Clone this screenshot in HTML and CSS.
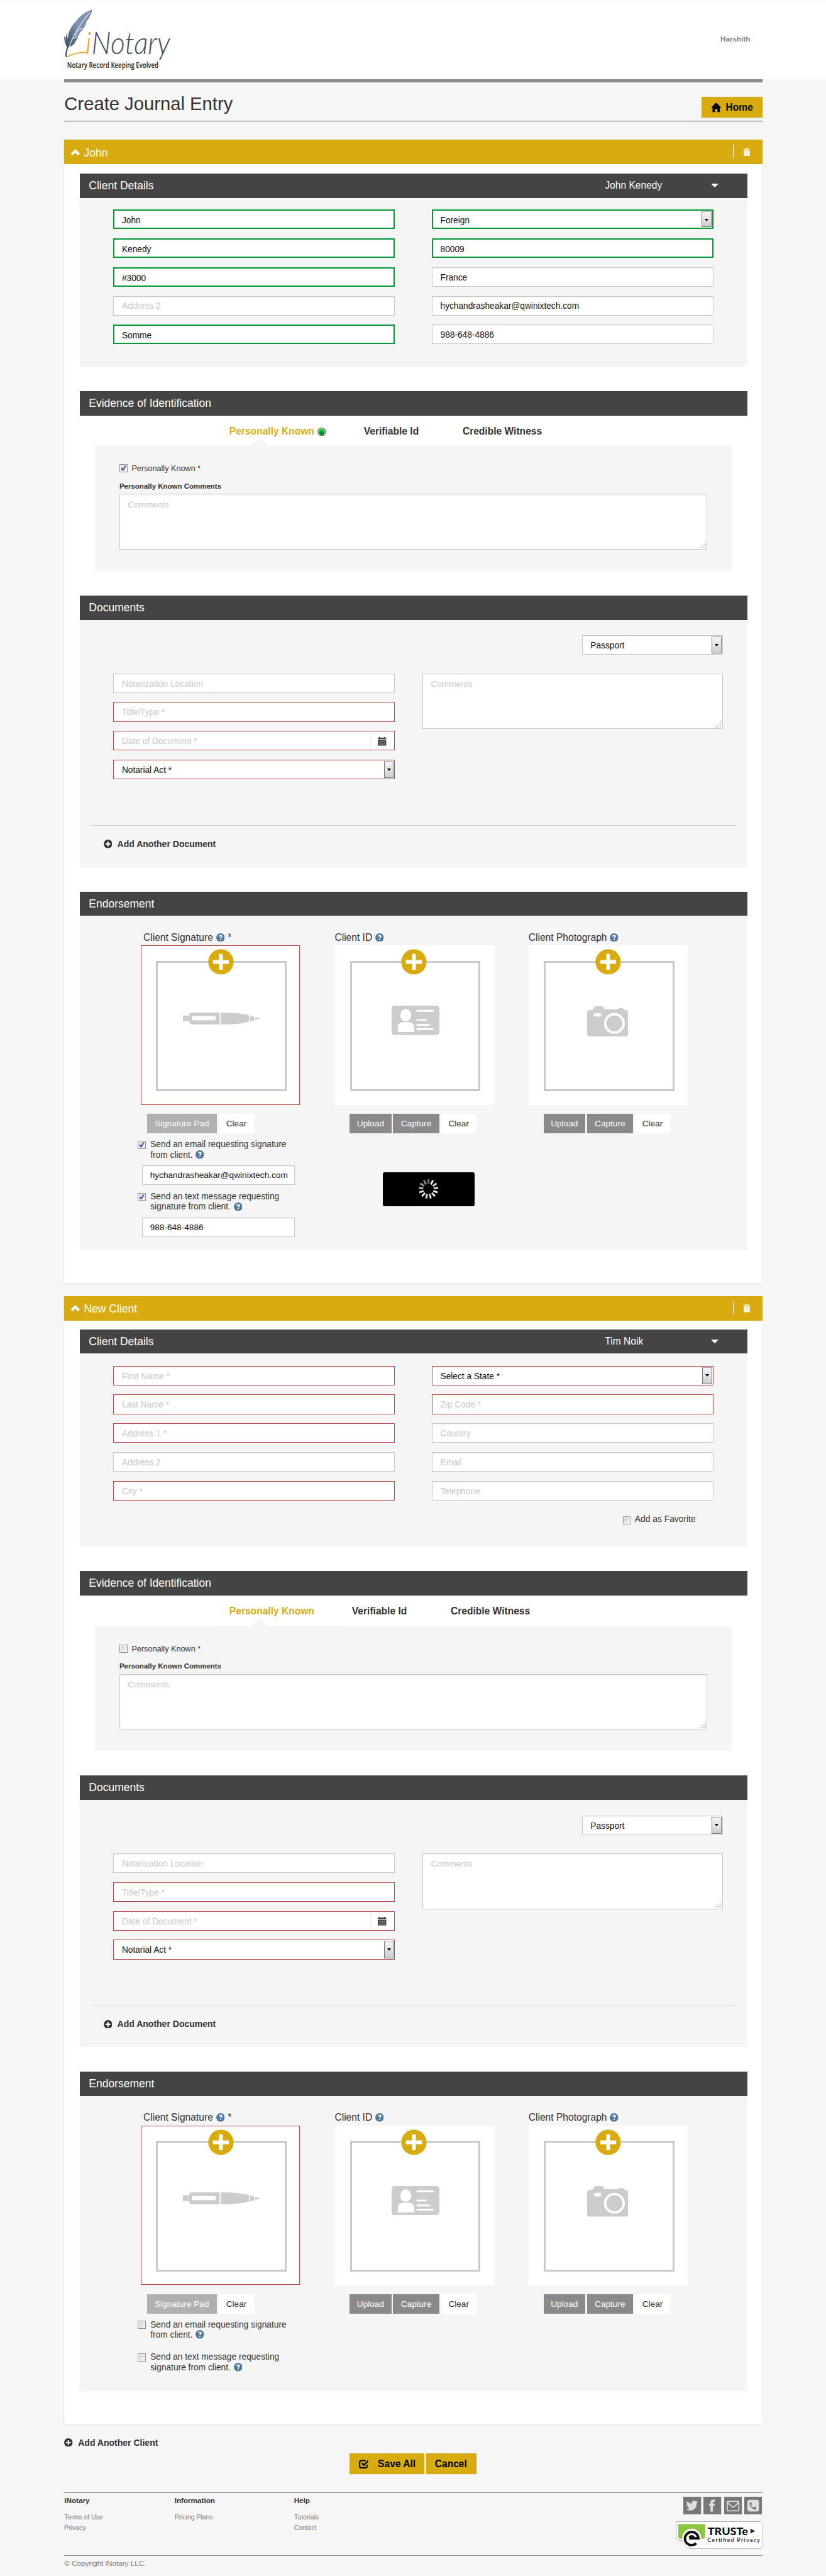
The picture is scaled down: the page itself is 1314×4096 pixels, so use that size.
FILE: index.html
```html
<!DOCTYPE html>
<html lang="en">
<head>
<meta charset="utf-8">
<title>iNotary - Create Journal Entry</title>
<link rel="stylesheet" href="styles.css">
</head>
<body>
<svg class="sprite" width="0" height="0" aria-hidden="true">
  <defs>
    <linearGradient id="quill" x1="1" y1="0" x2="0" y2="1"><stop offset="0" stop-color="#7d91b5"/><stop offset=".5" stop-color="#8093ac"/><stop offset="1" stop-color="#35475c"/></linearGradient>
    <linearGradient id="led" x1="0" y1="0" x2="0" y2="1"><stop offset="0" stop-color="#2fd04a"/><stop offset=".5" stop-color="#0ba52e"/><stop offset="1" stop-color="#064d10"/></linearGradient>
  </defs>
  <symbol id="chevron" viewBox="0 0 18 12"><path d="M1.500 8.500 9 1l7.500 7.500-3 3L9 7l-4.500 4.500z" fill="#fff"/></symbol>
  <symbol id="trash" viewBox="0 0 12 14"><path d="M4 2.500V.7h4v1.800M.3 3.100h11.400" stroke="#fff" stroke-width="1.200" fill="none"/><path d="M1.500 5h9v8.500h-9z" fill="#fff" stroke="#fff" stroke-width=".8"/><path d="M3.700 5.500v7M6 5.500v7M8.300 5.500v7" stroke="#e3c25a" stroke-width=".6"/></symbol>
  <symbol id="home" viewBox="0 0 17 16"><path d="M8.500 0 17 8.500h-2.500V16h-4v-5.500h-4V16h-4V8.500H0z"/></symbol>
  <symbol id="help" viewBox="0 0 14 14"><circle cx="7" cy="7" r="7" fill="#51779d"/><path d="M4.900 5.400C5 3.900 6 3.500 7.100 3.500c1.200 0 2.100.6 2.100 1.700C9.200 6.500 7.200 6.500 7.100 8.100" fill="none" stroke="#fff" stroke-width="1.900"/><path d="M6 9.200h2.200v1.900H6z" fill="#fff"/></symbol>
  <symbol id="plus" viewBox="0 0 42 42"><circle cx="21" cy="21" r="20.700" fill="#d8ac10"/><path d="M18 8h6v10h10v6H24v10h-6V24H8v-6h10z" fill="#fff"/></symbol>
  <symbol id="add" viewBox="0 0 14 14"><circle cx="7" cy="7" r="7" fill="#333"/><path d="M5.900 3h2.200v2.900H11v2.200H8.100V11H5.900V8.100H3V5.900h2.900z" fill="#fff"/></symbol>
  <symbol id="calendar" viewBox="0 0 14 14"><path d="M0 1h2V0h2v1h6V0h2v1h2v2.500H0zM0 4.500h14V14H0z" fill="#444"/><path d="M0 4h14" stroke="#bbb"/><path d="M2 7.500h10M2 10h10M2 12.300h10M3.500 6v7.500M7 6v7.500M10.500 6v7.500" stroke="#999" stroke-width=".6"/></symbol>
  <symbol id="pen" viewBox="0 0 126 20"><path fill="#ccc" d="M0 5h9.500v9H0zM15 0h45v19.500H15q-5-1-5-5V5q0-4.500 5-5zM62 0q30 0 46 4.500v10Q92 19.500 62 19.500zM109.500 5l7 2v6l-7 2zM118 7.500l8 2.200-8 2.300z"/><path fill="#fff" d="M15 6h36q3 0 3 3.300T51 12.500H15z"/></symbol>
  <symbol id="idcard" viewBox="0 0 78 48"><rect width="78" height="48" rx="5" fill="#ccc"/><ellipse cx="23" cy="15.500" rx="9" ry="10" fill="#fff"/><path d="M10 43V36q0-8 8-9h10q9 1 9 9v7z" fill="#fff"/><path d="M42 8.500h26M42 23.500h14M42 31.500h20M42 38.500h25" stroke="#fff" stroke-width="3" stroke-linecap="round"/></symbol>
  <symbol id="camera" viewBox="0 0 67 50"><path fill="#ccc" d="M5 6h4q2-6 5-6h10q3 0 4 5h22l3-2h5l3 3q6 0 6 5v34q0 5-5 5H5q-5 0-5-5V11q0-5 5-5z"/><rect x="11" y="11" width="12" height="6" rx="3" fill="#fff"/><circle cx="44.500" cy="28" r="15" fill="none" stroke="#fff" stroke-width="4"/></symbol>
</svg>
<div class="page">
  <header class="header">
    <div class="container header-row">
      <svg class="logo" width="180" height="110" viewBox="0 0 180 110">
        <path d="M46 7.500C36 10 24 19 20 26 8 38 6 48 6 56L4 46C2 54 2 62 6 70c4-3 8-3 12-9 4-6 5-10 8-16 6-7 10-11 10-17C42 20 45 14 46 7.500z" fill="url(#quill)"/>
        <path d="M1 52c0 7 2 12 5 17" stroke="#4b5c72" stroke-width="2" fill="none"/>
        <path d="M42 12C27 30 14 50 8 69M18 50l5-8M23 50l-8 5M29 38l-7 3" stroke="#e9eef4" stroke-width="1.200" fill="none"/>
        <path d="M8 66C5 72 4 78 4 85l-2-1C2 77 3 72 6 66z" fill="#35475c"/>
        <path d="M4 85Q17 77 37 77" stroke="#e8a317" stroke-width="1.500" fill="none"/>
        <text class="logo-name" x="35" y="80" textLength="138" lengthAdjust="spacingAndGlyphs"><tspan class="logo-i">i</tspan>Notary</text>
        <text class="logo-tag" x="5" y="103" textLength="149" lengthAdjust="spacingAndGlyphs">Notary Record Keeping Evolved</text>
      </svg>
      <span class="user">Harshith</span>
    </div>
  </header>
  <main class="container">
    <div class="title-row">
      <h1>Create Journal Entry</h1>
      <a class="btn-gold home"><svg width="17" height="16"><use href="#home"/></svg>Home</a>
    </div>

    <section class="card">
      <div class="card-head"><svg width="18" height="12"><use href="#chevron"/></svg><span>John</span><i class="divider"></i><svg class="trash" width="12" height="14"><use href="#trash"/></svg></div>
      <div class="bar"><span>Client Details</span><span class="picked">John Kenedy</span><i class="caret"></i></div>
      <div class="panel client">
        <div class="cols">
          <div class="fields">
            <div class="field ok">John</div>
            <div class="field ok">Kenedy</div>
            <div class="field ok">#3000</div>
            <div class="field empty">Address 2</div>
            <div class="field ok">Somme</div>
          </div>
          <div class="fields">
            <div class="field ok select">Foreign<i class="arrow"></i></div>
            <div class="field ok">80009</div>
            <div class="field">France</div>
            <div class="field">hychandrasheakar@qwinixtech.com</div>
            <div class="field">988-648-4886</div>
          </div>
        </div>
      </div>

      <div class="bar spaced">Evidence of Identification</div>
      <div class="tabs">
        <span class="tab active">Personally Known<svg class="led" width="14" height="14" viewBox="0 0 14 14"><circle cx="7" cy="7" r="6.300" fill="#fff" stroke="#25802c" stroke-width="1.200"/><circle cx="7" cy="7" r="4.900" fill="url(#led)"/></svg></span>
        <span class="tab verify">Verifiable Id</span>
        <span class="tab">Credible Witness</span>
      </div>
      <div class="panel evidence">
        <div class="known"><i class="check"><svg width="9" height="9" viewBox="0 0 9 9"><path d="M1 4.500 3.500 7.500 8 .8" fill="none" stroke="#3b4f9e" stroke-width="2"/></svg></i>Personally Known *</div>
        <div class="known-label">Personally Known Comments</div>
        <div class="area">Comments<i class="grip"></i></div>
      </div>

      <div class="bar spaced">Documents</div>
      <div class="panel documents">
        <div class="field select doc-type">Passport<i class="arrow"></i></div>
        <div class="cols">
          <div class="fields">
            <div class="field empty">Notarization Location</div>
            <div class="field empty bad">Title/Type *</div>
            <div class="field empty bad date">Date of Document *<span class="cal"><svg width="14" height="14"><use href="#calendar"/></svg></span></div>
            <div class="field bad select">Notarial Act *<i class="arrow"></i></div>
          </div>
          <div class="area">Comments<i class="grip"></i></div>
        </div>
        <div class="add"><svg width="14" height="14"><use href="#add"/></svg>Add Another Document</div>
      </div>

      <div class="bar spaced">Endorsement</div>
      <div class="panel endorse">
        <div class="shot signature">
          <div class="shot-label">Client Signature <svg width="14" height="14"><use href="#help"/></svg> *</div>
          <div class="frame bad"><div class="inner"><svg width="126" height="20"><use href="#pen"/></svg><svg class="plus" width="42" height="42"><use href="#plus"/></svg></div></div>
          <div class="buttons"><span class="btn pad">Signature Pad</span><span class="btn clear">Clear</span></div>
          <div class="ask"><i class="check"><svg width="9" height="9" viewBox="0 0 9 9"><path d="M1 4.500 3.500 7.500 8 .8" fill="none" stroke="#3b4f9e" stroke-width="2"/></svg></i><span>Send an email requesting signature<br>from client. <svg width="14" height="14"><use href="#help"/></svg></span></div>
          <div class="field contact">hychandrasheakar@qwinixtech.com</div>
          <div class="ask"><i class="check"><svg width="9" height="9" viewBox="0 0 9 9"><path d="M1 4.500 3.500 7.500 8 .8" fill="none" stroke="#3b4f9e" stroke-width="2"/></svg></i><span>Send an text message requesting<br>signature from client. <svg width="14" height="14"><use href="#help"/></svg></span></div>
          <div class="field contact">988-648-4886</div>
        </div>
        <div class="shot">
          <div class="shot-label">Client ID <svg width="14" height="14"><use href="#help"/></svg></div>
          <div class="frame"><div class="inner"><svg width="78" height="48"><use href="#idcard"/></svg><svg class="plus" width="42" height="42"><use href="#plus"/></svg></div></div>
          <div class="buttons"><span class="btn upload">Upload</span><span class="btn capture">Capture</span><span class="btn clear">Clear</span></div>
          <div class="loader"><svg width="32" height="32" viewBox="-16 -16 32 32" stroke-width="3"><path d="M0-8.500V-16" stroke="#777"/><path d="M0-8.500V-16" stroke="#eee" transform="rotate(27.700)"/><path d="M0-8.500V-16" stroke="#ddd" transform="rotate(55.400)"/><path d="M0-8.500V-16" stroke="#ddd" transform="rotate(83)"/><path d="M0-8.500V-16" stroke="#eee" transform="rotate(110.800)"/><path d="M0-8.500V-16" stroke="#eee" transform="rotate(138.500)"/><path d="M0-8.500V-16" stroke="#ddd" transform="rotate(166)"/><path d="M0-8.500V-16" stroke="#ddd" transform="rotate(193.800)"/><path d="M0-8.500V-16" stroke="#eee" transform="rotate(221.500)"/><path d="M0-8.500V-16" stroke="#ddd" transform="rotate(249)"/><path d="M0-8.500V-16" stroke="#bbb" transform="rotate(277)"/><path d="M0-8.500V-16" stroke="#999" transform="rotate(304.600)"/><path d="M0-8.500V-16" stroke="#888" transform="rotate(332.300)"/></svg></div>
        </div>
        <div class="shot photo">
          <div class="shot-label">Client Photograph <svg width="14" height="14"><use href="#help"/></svg></div>
          <div class="frame"><div class="inner"><svg width="67" height="50"><use href="#camera"/></svg><svg class="plus" width="42" height="42"><use href="#plus"/></svg></div></div>
          <div class="buttons"><span class="btn upload">Upload</span><span class="btn capture">Capture</span><span class="btn clear">Clear</span></div>
        </div>
      </div>
    </section>

    <section class="card new">
      <div class="card-head"><svg width="18" height="12"><use href="#chevron"/></svg><span>New Client</span><i class="divider"></i><svg class="trash" width="12" height="14"><use href="#trash"/></svg></div>
      <div class="bar"><span>Client Details</span><span class="picked">Tim Noik</span><i class="caret"></i></div>
      <div class="panel client">
        <div class="cols">
          <div class="fields">
            <div class="field empty bad">First Name *</div>
            <div class="field empty bad">Last Name *</div>
            <div class="field empty bad">Address 1 *</div>
            <div class="field empty">Address 2</div>
            <div class="field empty bad">City *</div>
          </div>
          <div class="fields">
            <div class="field bad select">Select a State *<i class="arrow"></i></div>
            <div class="field empty bad">Zip Code *</div>
            <div class="field empty">Country</div>
            <div class="field empty">Email</div>
            <div class="field empty">Telephone</div>
          </div>
        </div>
        <div class="favorite"><i class="check"></i>Add as Favorite</div>
      </div>

      <div class="bar spaced">Evidence of Identification</div>
      <div class="tabs">
        <span class="tab active">Personally Known</span>
        <span class="tab verify">Verifiable Id</span>
        <span class="tab">Credible Witness</span>
      </div>
      <div class="panel evidence">
        <div class="known"><i class="check"></i>Personally Known *</div>
        <div class="known-label">Personally Known Comments</div>
        <div class="area">Comments<i class="grip"></i></div>
      </div>

      <div class="bar spaced">Documents</div>
      <div class="panel documents">
        <div class="field select doc-type">Passport<i class="arrow"></i></div>
        <div class="cols">
          <div class="fields">
            <div class="field empty">Notarization Location</div>
            <div class="field empty bad">Title/Type *</div>
            <div class="field empty bad date">Date of Document *<span class="cal"><svg width="14" height="14"><use href="#calendar"/></svg></span></div>
            <div class="field bad select">Notarial Act *<i class="arrow"></i></div>
          </div>
          <div class="area">Comments<i class="grip"></i></div>
        </div>
        <div class="add"><svg width="14" height="14"><use href="#add"/></svg>Add Another Document</div>
      </div>

      <div class="bar spaced">Endorsement</div>
      <div class="panel endorse">
        <div class="shot signature">
          <div class="shot-label">Client Signature <svg width="14" height="14"><use href="#help"/></svg> *</div>
          <div class="frame bad"><div class="inner"><svg width="126" height="20"><use href="#pen"/></svg><svg class="plus" width="42" height="42"><use href="#plus"/></svg></div></div>
          <div class="buttons"><span class="btn pad">Signature Pad</span><span class="btn clear">Clear</span></div>
          <div class="ask"><i class="check"></i><span>Send an email requesting signature<br>from client. <svg width="14" height="14"><use href="#help"/></svg></span></div>
          <div class="ask"><i class="check"></i><span>Send an text message requesting<br>signature from client. <svg width="14" height="14"><use href="#help"/></svg></span></div>
        </div>
        <div class="shot">
          <div class="shot-label">Client ID <svg width="14" height="14"><use href="#help"/></svg></div>
          <div class="frame"><div class="inner"><svg width="78" height="48"><use href="#idcard"/></svg><svg class="plus" width="42" height="42"><use href="#plus"/></svg></div></div>
          <div class="buttons"><span class="btn upload">Upload</span><span class="btn capture">Capture</span><span class="btn clear">Clear</span></div>
        </div>
        <div class="shot photo">
          <div class="shot-label">Client Photograph <svg width="14" height="14"><use href="#help"/></svg></div>
          <div class="frame"><div class="inner"><svg width="67" height="50"><use href="#camera"/></svg><svg class="plus" width="42" height="42"><use href="#plus"/></svg></div></div>
          <div class="buttons"><span class="btn upload">Upload</span><span class="btn capture">Capture</span><span class="btn clear">Clear</span></div>
        </div>
      </div>
    </section>

    <div class="add add-client"><svg width="14" height="14"><use href="#add"/></svg>Add Another Client</div>
    <div class="actions">
      <a class="btn-gold save"><svg width="16" height="15" viewBox="0 0 16 15"><path d="M11 1.500H4Q1.200 1.500 1.200 4.500v6q0 3 3 3h6q3 0 3-3V8.500" fill="none" stroke="#000" stroke-width="2.200"/><path d="M5 5.500 8 9l7-7" fill="none" stroke="#000" stroke-width="2.500"/></svg>Save All</a>
      <a class="btn-gold cancel">Cancel</a>
    </div>
  </main>
  <footer class="container footer">
    <div class="foot-main">
      <div class="foot-col one"><b>iNotary</b><span>Terms of Use</span><span>Privacy</span></div>
      <div class="foot-col two"><b>Information</b><span>Pricing Plans</span></div>
      <div class="foot-col"><b>Help</b><span>Tutorials</span><span>Contact</span></div>
      <div class="foot-side">
        <div class="social">
          <svg width="29" height="29" viewBox="0 0 29 29"><rect width="29" height="29" fill="#777"/><path d="M24 8.500l-2 2.200C22 18 17 22.500 11 22.500c-2.500 0-4.500-.6-6.200-1.700 2 .1 4-.4 5.500-1.700-1.700-.1-3-1.200-3.500-2.700h1.700C6.600 16 5.400 14.300 5.400 12.300l1.700.5C5.400 11.500 4.900 9.200 6 7.300c2 2.400 4.900 3.800 8 4-.6-2.700 1.400-4.800 3.900-4.800 1.200 0 2.100.5 2.800 1.200l2.500-.9-1.500 2.100z" fill="#ddd"/></svg>
          <svg width="29" height="29" viewBox="0 0 29 29"><rect width="29" height="29" fill="#777"/><path d="M11.500 24.500V15H9v-3.800h2.500V9c0-3 1.600-4.400 4.500-4.400h2.600v3.800h-1.700c-1.200 0-1.400.5-1.400 1.500v1.300h3.100L18.200 15h-2.700v9.500z" fill="#ddd"/></svg>
          <svg width="29" height="29" viewBox="0 0 29 29"><rect width="29" height="29" fill="#777"/><rect x="5" y="7.500" width="19" height="15.500" rx="1.500" fill="none" stroke="#ddd" stroke-width="1.800"/><path d="M5.500 9.500l7.500 7q1.500 1 3 0l7.500-7" fill="none" stroke="#ddd" stroke-width="1.800"/></svg>
          <svg width="29" height="29" viewBox="0 0 29 29"><rect width="29" height="29" fill="#777"/><rect x="5" y="5" width="19" height="19" rx="4" fill="#ddd"/><path d="M8.500 10.500Q9 9 11 8.500l1.500 3.500-1.500 1.500q1.500 3 4 4.200l1.700-1.500 3.300 1.800q-.5 2.500-2.500 2.700Q15 21 11.500 17.300 8.300 13.500 8.500 10.500z" fill="#777"/></svg>
        </div>
        <svg class="truste" width="142" height="45" viewBox="0 0 142 45"><path d="M.5.5h138l3 3v38l-3 3H24q-8 0-13-13H9Q.5 31.500.5 25z" fill="#fff" stroke="#aaa"/><path d="M4 4.500h44v20q0 4-5 4H8q-4 0-4-4z" fill="#8cc63e"/><circle cx="26" cy="27.500" r="15.500" fill="#fff"/><path d="M33.500 36Q29 40 22.500 38.500C17 37 14.500 32 15 27.500c.6-6 5.500-10 11-10 6 0 10.500 4.500 11 10.300H22" fill="none" stroke="#111" stroke-width="4"/><path d="M21 26.500a5 4 0 0 1 10 0z" fill="#111"/><text class="tr-name" x="52" y="22.500" textLength="66" lengthAdjust="spacingAndGlyphs">TRUSTe</text><path d="M122 12l7.500 4-7.500 4z" fill="#222"/><text class="tr-sub" x="51.500" y="34" textLength="86">Certified Privacy</text></svg>
      </div>
    </div>
    <div class="copyright">© Copyright iNotary LLC.</div>
  </footer>
</div>
</body>
</html>
```
FILE: styles.css
```css
* { box-sizing: border-box; }
html, body { margin: 0; background: #f6f6f6; }
.page {
  zoom: 0.9743;
  width: 1349px;
  height: 4204px;
  overflow: hidden;
  font-family: "Liberation Sans", Arial, sans-serif;
  font-size: 14px;
  color: #333;
  background: #f6f6f6;
}
svg { display: block; flex: none; }
.sprite { position: absolute; }
.container { width: 1140px; margin: 0 auto 0 105px; }

/* header */
.header { height: 129px; background: #fff; border-top: 1px solid #f4f4f4; }
.header-row { display: flex; justify-content: space-between; padding-right: 20px; }
.logo { margin-top: 7px; overflow: visible; }
.logo-name { font: italic 300 50px Lato, sans-serif; fill: #414f63; }
.logo-i { fill: #e8a317; }
.logo-tag { font: 600 12px "Open Sans", sans-serif; fill: #222; }
.user { margin-top: 54px; font: bold 12px/16px "Liberation Sans", sans-serif; color: #7f7f7f; }

.title-row {
  display: flex; justify-content: space-between; align-items: flex-start;
  height: 69px; border-top: 5.200px solid #8a8a8a; border-bottom: 1px solid #444;
}
h1 { margin: 16px 0 0; font-size: 30px; line-height: 40px; font-weight: normal; color: #333; }
.btn-gold {
  display: flex; align-items: center; height: 34px;
  font-weight: bold; font-size: 16px; color: #000;
  background: #d8ac10; border-top: 1px solid #cfa31c;
  box-shadow: 0 1px 2px rgba(0,0,0,.08);
}
.home { margin-top: 24px; width: 100px; padding-left: 16px; gap: 7px; }

/* client cards */
.card { margin-top: 30px; height: 1867px; padding: 0 25px; background: #fff; box-shadow: 0 1px 2px rgba(0,0,0,.1); }
.card.new { margin-top: 20px; height: 1842px; }
.card-head {
  display: flex; align-items: center; height: 40px; margin: 0 -25px 15px; padding: 0 20px 0 9px;
  font-size: 18px; color: #fff; background: #d8ac10;
}
.card-head span { margin: 3px 0 0 5px; }
.divider { width: 1px; height: 21px; margin: 0 15px 0 auto; background: #fff; }
.bar {
  display: flex; align-items: center; height: 40px; padding: 0 47px 0 15px;
  font-size: 18px; line-height: 40px; color: #fff; background: #444;
}
.new .bar:nth-child(2) { height: 39px; line-height: 39px; }
.bar.spaced { margin-top: 40px; }
.picked { width: 173px; margin-left: auto; font-size: 16px; }
.caret { border: solid transparent; border-width: 7px 6.500px 0; border-top-color: #fff; }
.panel { background: #f5f5f5; }
.client { height: 275px; padding: 19px 55px 0; }
.new .client { height: 315px; padding-top: 20px; }
.cols { display: flex; gap: 60px; }
.fields { display: flex; flex-direction: column; gap: 15px; width: 460px; }
.field {
  position: relative; height: 32px; padding: 2px 13px 0; line-height: 29px; font-size: 14.100px;
  color: #111; background: #fff; border: 1px solid #c8c8c8; box-shadow: inset 0 2px 2px rgba(0,0,0,.04);
  white-space: nowrap;
}
.ok { border: 2.100px solid #009933; line-height: 28px; padding-left: 12px; }
.field.empty, .area { color: #c8c8c8; }
.bad { border-color: #b94a48; }
.arrow {
  position: absolute; right: 1px; top: 1px; bottom: 1px; width: 16px;
  background: linear-gradient(#f4f4f4, #e3e3e3 50%, #ccc); border: 1px solid #777; border-top-color: #aaa;
}
.arrow::after { content: ""; position: absolute; left: 4px; top: 11px; border: solid transparent; border-width: 5px 3.500px 0; border-top-color: #000; }
.check {
  display: flex; align-items: center; justify-content: center; flex: none;
  width: 13px; height: 13px; border: 1px solid #8e8f8f; box-shadow: inset 0 0 0 1px #f4f4f4;
  background: linear-gradient(135deg, #cbcfd5, #f6f6f6);
}
.favorite { display: flex; align-items: center; gap: 6.500px; height: 20px; margin: 20px 0 0 832px; font-size: 14.200px; }
.favorite .check { margin-top: 5px; }

/* identification */
.tabs { display: flex; height: 49px; padding: 15.500px 0 0 244.500px; font-weight: bold; font-size: 16px; line-height: 21px; }
.tab { white-space: nowrap; }
.tab.active { position: relative; display: flex; gap: 5.500px; margin-right: 61.500px; color: #d8ac10; }
.tab.active::before { content: ""; position: absolute; left: -29px; top: 33.500px; width: 217px; height: 1px; background: #fff; }
.tab.active::after { content: ""; position: absolute; left: 36px; top: 20.500px; border: solid transparent; border-width: 0 14px 14px; border-bottom-color: #f5f5f5; }
.led { margin-top: 4px; }
.verify { margin-right: 71.500px; }
.evidence { height: 205px; margin: 0 25px; padding: 28.500px 40px 0; }
.known { display: flex; align-items: flex-start; gap: 7px; height: 29.500px; font-size: 13px; line-height: 19px; }
.known .check { margin-top: 2.500px; }
.known-label { height: 21px; font-weight: bold; font-size: 11.800px; line-height: 18px; }
.area { position: relative; width: 960px; height: 91px; padding: 7.500px 12.500px; line-height: 19px; background: #fff; border: 1px solid #c8c8c8; box-shadow: inset 0 2px 2px rgba(0,0,0,.04); }
.grip { position: absolute; right: 1px; bottom: 1px; width: 12px; height: 12px; background: radial-gradient(circle, #b5b5b5 1.200px, transparent 1.500px) 0 0 / 4px 4px; clip-path: polygon(100% 0, 100% 100%, 0 100%); }

/* documents */
.documents { height: 403px; padding: 25px 20px 0; }
.doc-type { width: 230px; margin: 0 20px 30px auto; }
.documents .cols { gap: 45px; padding-left: 35px; }
.documents .area { width: 490px; }
.cal { position: absolute; right: 0; top: 0; width: 39px; height: 30px; padding: 9px 0 0 11px; border-left: 1px solid #f1f1f1; }
.add { display: flex; align-items: center; gap: 8.500px; height: 20px; font-weight: bold; font-size: 14.400px; }
.documents .add { height: 60px; margin-top: 75px; padding: 0 0 0 19px; border-top: 1px solid #c8c8c8; }

/* endorsement */
.endorse { display: flex; gap: 56.500px; height: 545px; padding: 24px 0 0 100px; }
.new .endorse { height: 481px; }
.shot { width: 260px; }
.shot-label { display: flex; align-items: center; gap: 5px; height: 24px; padding-bottom: 2px; font-size: 16px; white-space: nowrap; }
.signature .shot-label { padding-left: 4px; }
.frame { height: 260px; padding: 24px; background: #fff; border: 1px solid #fff; }
.frame.bad { border-color: #b94a48; }
.inner { position: relative; display: flex; align-items: center; justify-content: center; width: 213px; height: 213px; padding-bottom: 18px; border: 3.100px solid #c9c9c9; }
.signature .inner { padding-bottom: 24px; }
.photo .inner { padding: 0 4px 15px 0; }
.plus { position: absolute; left: 81.500px; top: -22px; }
.shot:not(.signature) .plus { left: 80.500px; }
.buttons { display: flex; gap: 3px; margin-top: 15px; padding-left: 25px; }
.shot:not(.signature) .buttons { padding-left: 24.500px; }
.signature .buttons { padding-left: 10px; }
.btn { height: 32px; line-height: 32px; text-align: center; color: #fff; background: #8a8a8a; }
.upload { width: 68px; border-top: 1px solid #7c8583; line-height: 31px; }
.capture { width: 75px; border-top: 1px solid #7c8583; line-height: 31px; }
.btn.pad { width: 114px; background: #b0b0b0; }
.btn.clear { width: 58px; color: #333; background: #fff; }
.ask { display: flex; gap: 7.500px; height: 34px; margin: 10px 0 0 -5px; font-size: 14.150px; line-height: 17px; white-space: nowrap; }
.ask .check { margin-top: 2px; }
.ask span svg { display: inline-block; vertical-align: -2px; margin-left: 1px; }
.field.contact { width: 249px; height: 32px; margin: 8px 0 11px 2px; padding: 1px 0 0 12px; font-size: 14px; }
.new .ask + .ask { margin-top: 19px; }
.loader { display: flex; align-items: center; justify-content: center; width: 150px; height: 56px; margin: 63px 0 0 78.500px; border-radius: 3px; background: #000; }

/* page actions and footer */
.add-client { margin-top: 19px; }
.actions { display: flex; gap: 3px; margin: 8px 0 30px 466px; }
.save { width: 122px; padding-left: 15px; gap: 15px; }
.cancel { width: 82px; padding-left: 14px; }
.foot-main { display: flex; height: 103px; border-top: 1px solid #888; border-bottom: 1px solid #888; }
.foot-col { display: flex; flex-direction: column; padding-top: 4px; font-size: 10.700px; line-height: 18px; color: #7a7a7a; }
.foot-col b { margin-bottom: 10px; font-size: 12px; line-height: 16px; color: #333; }
.one { width: 180px; }
.two { width: 195px; }
.foot-side { margin-left: auto; }
.social { display: flex; gap: 4px; margin: 6px 1px 11px 13px; }
.tr-name { font: 900 16.500px Lato, sans-serif; fill: #111; }
.tr-sub { font: 600 9.500px Lato, sans-serif; fill: #222; }
.copyright { font-size: 12px; line-height: 20px; padding-top: 2px; color: #7a7a7a; }
```
